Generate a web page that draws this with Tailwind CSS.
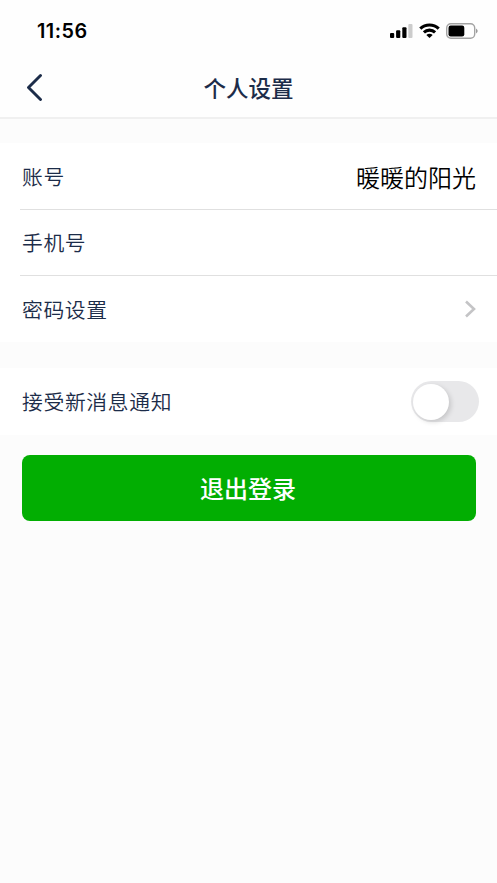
<!DOCTYPE html>
<html lang="zh-CN">
<head>
<meta charset="utf-8">
<meta name="viewport" content="width=device-width, initial-scale=1">
<title>个人设置</title>
<script src="https://cdn.jsdelivr.net/npm/@tailwindcss/browser@4"></script>
</head>
<body class="min-h-screen overflow-hidden bg-[#fcfcfc] font-['Noto_Sans_CJK_SC',sans-serif] text-[#1c2c49]">
<header class="h-[119px] border-b-2 border-[#f0f0f0] bg-[#fefefe]">
  <div class="flex h-[58px] items-center justify-between pt-1 pl-[37px] pr-[19px] text-black">
    <span class="font-['Inter',sans-serif] text-[19.8px] leading-6 font-semibold tracking-[0.5px]">11:56</span>
    <div class="flex items-center">
      <svg class="h-[16px] w-[24px]" viewBox="0 0 24 16">
        <rect x="0" y="10" width="4.2" height="5" rx="1"/>
        <rect x="6.1" y="7.3" width="4.2" height="7.7" rx="1"/>
        <rect x="12.3" y="4.3" width="4.2" height="10.7" rx="1"/>
        <rect x="18.3" y="1" width="4.2" height="14" rx="1" fill="#cccccc"/>
      </svg>
      <svg class="ml-[5px] h-[16px] w-[21px]" viewBox="0 0 21 16" fill="none" stroke="#000" stroke-width="3.1">
        <path d="M1.3 5.6C6.5 .7 14.5 .7 19.7 5.6"/>
        <path d="M4.9 9.4C8.1 6.4 12.9 6.4 16.1 9.4"/>
        <path d="M10.5 15L7.3 12Q10.5 9.6 13.7 12Z" fill="#000" stroke="none"/>
      </svg>
      <svg class="ml-[6px] h-[16px] w-[32px]" viewBox="0 0 32 16">
        <rect x="0.7" y="0.8" width="28" height="14.4" rx="4.2" fill="none" stroke="#a3a3a3" stroke-width="1.4"/>
        <rect x="2.5" y="2.6" width="15.8" height="10.8" rx="2.2"/>
        <path d="M30 5.5Q33.4 8 30 10.5Z" fill="#999"/>
      </svg>
    </div>
  </div>
  <div class="grid h-[57px] grid-cols-[60px_1fr_60px] items-center">
    <button class="ml-[26px] h-[28px] w-[18px]" aria-label="返回">
      <svg class="h-[28px] w-[18px]" viewBox="0 0 18 28" fill="none" stroke="#1c2c49" stroke-width="2.9" stroke-linecap="round" stroke-linejoin="round"><path d="M14.5 2.5L2.5 14.5L14.5 26.5"/></svg>
    </button>
    <h1 class="text-center text-[22.5px] leading-8 font-medium">个人设置</h1>
  </div>
</header>
<main class="pt-6">
  <section class="bg-white pl-5 text-[20.8px] font-[350] tracking-[0.6px]">
    <div class="flex h-[67px] items-center justify-between border-b border-[#e0e0e0] pt-[2px] pr-[21px] pl-[2px]">
      <span>账号</span><span class="text-[24px] tracking-normal text-black">暖暖的阳光</span>
    </div>
    <div class="flex h-[66px] items-center border-b border-[#e0e0e0] pt-px pl-[2px]">手机号</div>
    <div class="flex h-[66px] items-center justify-between pr-[20px] pl-[2px]">
      <span class="pt-px">密码设置</span>
      <svg class="h-[18px] w-[13px]" viewBox="0 0 13 18" fill="none" stroke="#c4c4c6" stroke-width="2.6"><path d="M2 1.5L10 9L2 16.5"/></svg>
    </div>
  </section>
  <section class="mt-[26px] flex h-[67px] items-center justify-between bg-white pr-[18px] pl-[22px] text-[20.8px] font-[350] tracking-[0.65px]">
    <span class="pt-px">接受新消息通知</span>
    <div class="flex h-[41px] w-[68px] items-center rounded-full bg-[#e8e8ea] pl-[2px]" role="switch" aria-checked="false">
      <div class="h-[36px] w-[36px] rounded-full bg-white shadow-[2px_2px_5px_rgba(0,0,0,0.15)]"></div>
    </div>
  </section>
  <button class="mt-5 ml-[22px] flex h-[66px] w-[454px] items-center justify-center rounded-lg bg-[#02ae02] pr-[2px] text-[24px] font-medium text-white">退出登录</button>
</main>
</body>
</html>
